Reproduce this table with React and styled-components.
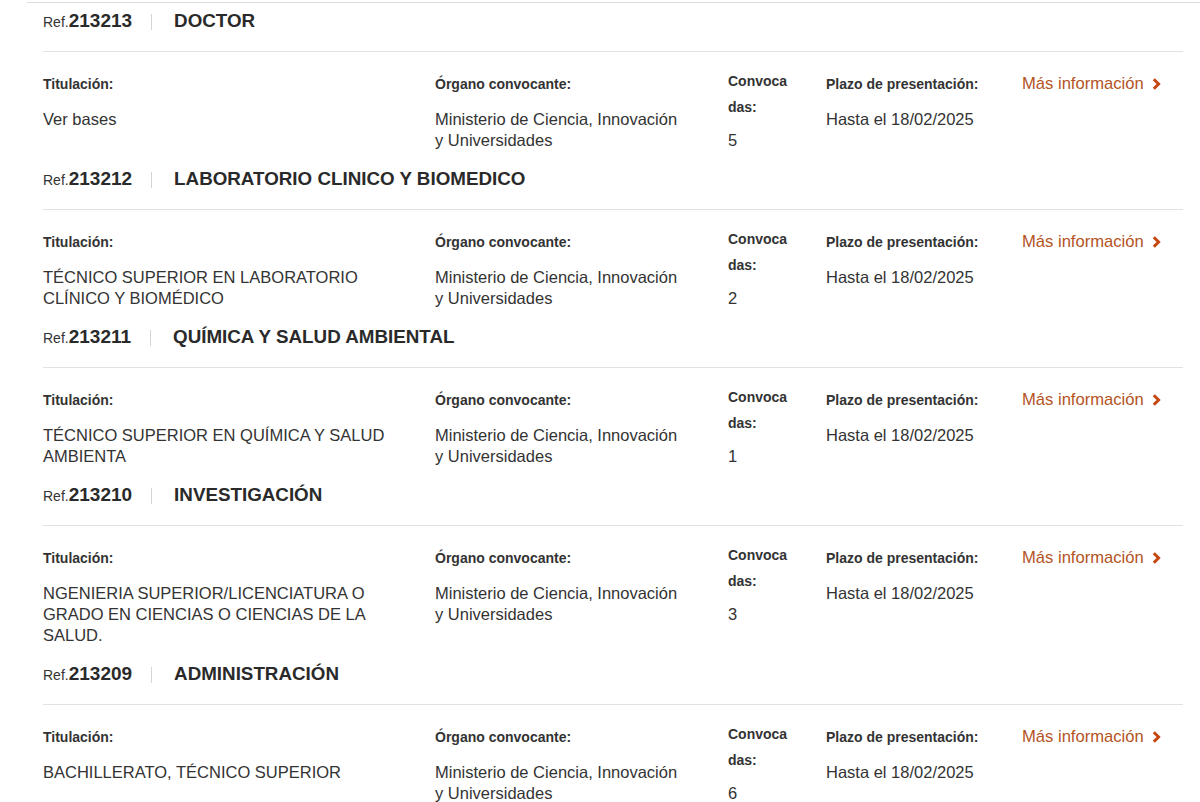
import { createGlobalStyle } from 'styled-components';
import styled from 'styled-components';

const GlobalStyle = createGlobalStyle`
  html, body {
    margin: 0;
    padding: 0;
    background: #fff;
  }
  body {
    font-family: "Liberation Sans", Arial, sans-serif;
    color: #333;
  }
`;

const colors = {
  text: '#333',
  dark: '#2a2a2a',
  rule: '#e2e2e2',
  link: '#b4541f',
  chevron: '#c4470f',
};

const List = styled.div`
  margin: 2px 0 0 27px;
  padding: 6px 17px 0 16px;
  border-top: 1px solid #dcdcdc;
`;

const Header = styled.div`
  display: flex;
  align-items: center;
  height: 24px;
  padding-bottom: 18px;
  border-bottom: 1px solid ${colors.rule};
`;

const RefLabel = styled.span`
  font-size: 14px;
  color: ${colors.text};
  line-height: 24px;
  b {
    font-size: 19px;
    font-weight: 700;
    color: ${colors.dark};
  }
`;

const Separator = styled.span`
  display: inline-block;
  width: 1px;
  height: 16px;
  background: #d4d4d4;
  margin: 1px 22px 0 19px;
`;

const Title = styled.h2`
  margin: 0;
  font-size: 18.8px;
  font-weight: 700;
  line-height: 24px;
  color: ${colors.dark};
`;

const Body = styled.div`
  display: grid;
  grid-template-columns: 392px 293px 98px 196px 1fr;
  align-items: start;
  padding: 19px 0 16px;
`;

const Field = styled.div`
  padding-right: ${p => p.$gutter || 0}px;
  margin-top: ${p => (p.$narrow ? -3 : 0)}px;
`;

const Label = styled.div`
  font-size: 14px;
  font-weight: 700;
  line-height: 26px;
  color: ${colors.text};
  margin-bottom: ${p => (p.$narrow ? 10 : 12)}px;
  width: ${p => (p.$narrow ? '63px' : 'auto')};
  word-break: ${p => (p.$narrow ? 'break-all' : 'normal')};
`;

const Value = styled.div`
  font-size: 16.5px;
  line-height: 21px;
  color: ${colors.text};
`;

const MoreLink = styled.a`
  display: inline-flex;
  align-items: center;
  gap: 8px;
  font-size: 16.6px;
  line-height: 26px;
  color: ${colors.link};
  text-decoration: none;
  white-space: nowrap;
`;

const Chevron = () => (
  <svg width="9" height="12" viewBox="0 0 9 12" aria-hidden="true">
    <path d="M1.8 1.2 L6.6 6 L1.8 10.8" fill="none" stroke={colors.chevron} strokeWidth="3" />
  </svg>
);

const offers = [
  { ref: '213213', title: 'DOCTOR', titulacion: 'Ver bases', plazas: 5 },
  {
    ref: '213212',
    title: 'LABORATORIO CLINICO Y BIOMEDICO',
    titulacion: 'TÉCNICO SUPERIOR EN LABORATORIO CLÍNICO Y BIOMÉDICO',
    plazas: 2,
  },
  {
    ref: '213211',
    title: 'QUÍMICA Y SALUD AMBIENTAL',
    titulacion: 'TÉCNICO SUPERIOR EN QUÍMICA Y SALUD AMBIENTA',
    plazas: 1,
  },
  {
    ref: '213210',
    title: 'INVESTIGACIÓN',
    titulacion: 'NGENIERIA SUPERIOR/LICENCIATURA O GRADO EN CIENCIAS O CIENCIAS DE LA SALUD.',
    plazas: 3,
  },
  {
    ref: '213209',
    title: 'ADMINISTRACIÓN',
    titulacion: 'BACHILLERATO, TÉCNICO SUPERIOR',
    plazas: 6,
  },
];

const Offer = ({ offer }) => (
  <section>
    <Header>
      <RefLabel>
        Ref.<b>{offer.ref}</b>
      </RefLabel>
      <Separator />
      <Title>{offer.title}</Title>
    </Header>
    <Body>
      <Field $gutter={30}>
        <Label>Titulación:</Label>
        <Value>{offer.titulacion}</Value>
      </Field>
      <Field $gutter={45}>
        <Label>Órgano convocante:</Label>
        <Value>Ministerio de Ciencia, Innovación y Universidades</Value>
      </Field>
      <Field $narrow>
        <Label $narrow>Convocadas:</Label>
        <Value>{offer.plazas}</Value>
      </Field>
      <Field $gutter={10}>
        <Label>Plazo de presentación:</Label>
        <Value>Hasta el 18/02/2025</Value>
      </Field>
      <Field>
        <MoreLink href="#">
          Más información
          <Chevron />
        </MoreLink>
      </Field>
    </Body>
  </section>
);

const App = () => (
  <>
    <GlobalStyle />
    <List>
      {offers.map(offer => (
        <Offer offer={offer} key={offer.ref} />
      ))}
    </List>
  </>
);

export default App;
